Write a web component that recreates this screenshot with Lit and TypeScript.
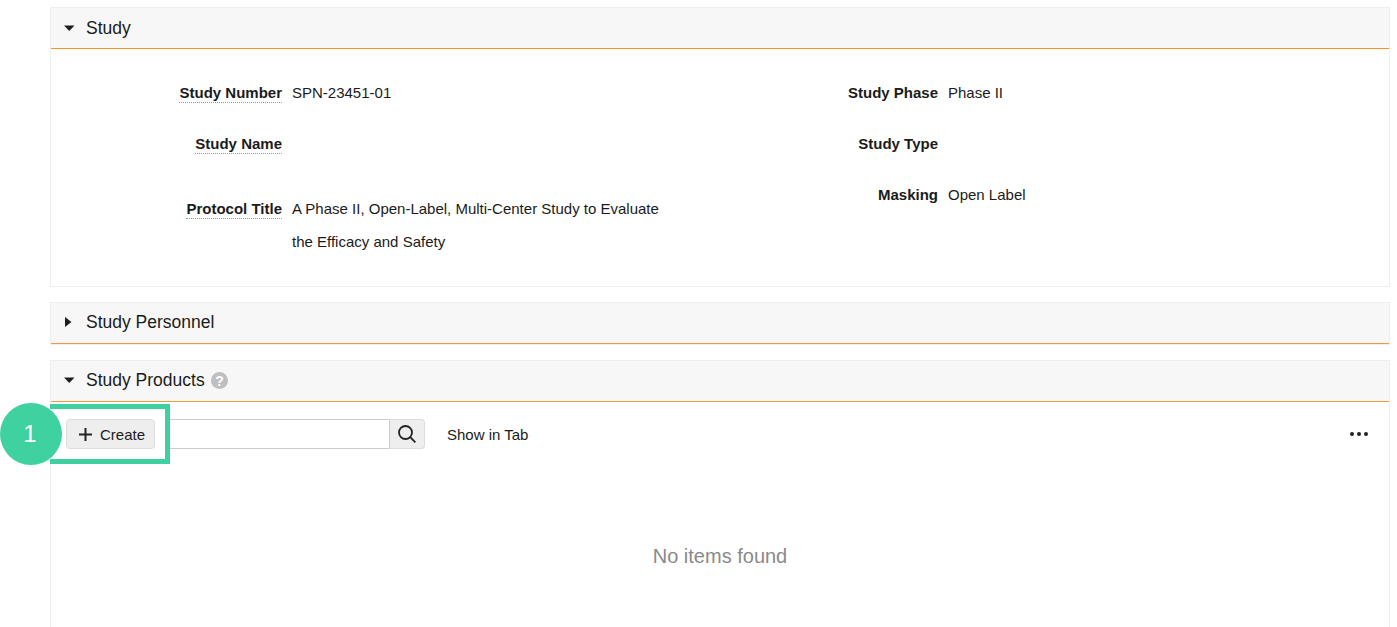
import { LitElement, html, css } from "lit";
import { customElement } from "lit/decorators.js";

@customElement("app-root")
export class AppRoot extends LitElement {
  static styles = css`
    :host {
      display: block;
      height: 627px;
      overflow: hidden;
      box-sizing: border-box;
      padding: 7px 7px 0 50px;
      background: #fff;
      font-family: "Liberation Sans", Arial, sans-serif;
      font-size: 15px;
      color: #1b1b1b;
    }
    .panel {
      border: 1px solid #eeeeee;
      background: #fff;
      margin-bottom: 15px;
    }
    .panel.last {
      margin-bottom: 0;
      border-bottom: none;
      height: 400px;
    }
    .head {
      height: 41px;
      box-sizing: border-box;
      display: flex;
      align-items: center;
      background: #f7f7f7;
      border-bottom: 1px solid #ee9a3f;
      font-size: 17.5px;
      padding-left: 13px;
      padding-bottom: 2px;
    }
    .head.active { border-bottom-color: #f7941d; padding-bottom: 0; }
    .caret { width: 11px; height: 10px; margin-right: 11px; flex: none; fill: #1f1f1f; }
    .help { width: 17px; height: 17px; margin-left: 6px; flex: none; }
    .fields { display: flex; padding: 34px 0 28px; }
    .col { flex: 1 1 0; display: flex; flex-direction: column; gap: 31px; }
    .row { display: grid; line-height: 20px; column-gap: 10px; }
    .left .row { grid-template-columns: 231px 1fr; }
    .right .row { grid-template-columns: 218px 1fr; }
    .row.tall { line-height: 33px; margin-top: 7px; }
    .label { text-align: right; font-weight: 700; }
    .label span.tip { border-bottom: 1px dotted #9a9a9a; padding-bottom: 1px; }
    .value { max-width: 380px; }
    .toolbar {
      position: relative;
      height: 64px;
      display: flex;
      align-items: center;
      padding: 0 20px 0 15px;
    }
    .search { display: flex; height: 30px; }
    .search .input {
      width: 323px;
      box-sizing: border-box;
      border: 1px solid #cccccc;
      border-right: none;
      background: #fff;
    }
    .search .go {
      width: 36px;
      box-sizing: border-box;
      border: 1px solid #dddddd;
      border-left: 1px solid #cccccc;
      border-radius: 0 4px 4px 0;
      background: #eeeeee;
      display: flex;
      align-items: center;
      justify-content: center;
    }
    .go svg { width: 18px; height: 18px; }
    .tab { margin-left: 22px; }
    .more { margin-left: auto; width: 20px; height: 6px; fill: #222; }
    .create {
      position: absolute;
      left: 15px;
      top: 17px;
      width: 89px;
      height: 30px;
      box-sizing: border-box;
      border: 1px solid #dddddd;
      border-radius: 4px;
      background: #eeeeee;
      display: flex;
      align-items: center;
      padding-left: 12px;
      gap: 8px;
    }
    .create svg { width: 13px; height: 13px; flex: none; }
    .mark {
      position: absolute;
      left: -1px;
      top: 2px;
      width: 120px;
      height: 60px;
      box-sizing: border-box;
      border: 5px solid #3fd0a0;
      border-left: none;
      background: #fff;
    }
    .badge {
      position: absolute;
      left: -51px;
      top: 1px;
      width: 62px;
      height: 62px;
      box-sizing: border-box;
      padding-right: 2px;
      border-radius: 50%;
      background: #3fd2a0;
      color: #fff;
      font-size: 24px;
      display: flex;
      align-items: center;
      justify-content: center;
    }
    .empty {
      text-align: center;
      font-size: 20px;
      color: #8a8a8a;
      padding-top: 78px;
      line-height: 24px;
    }
  `;

  private caretDown() {
    return html`<svg class="caret" viewBox="0 0 11 10"><path d="M0 2.5h10.5L5.25 8z" /></svg>`;
  }
  private caretRight() {
    return html`<svg class="caret" viewBox="0 0 11 10"><path d="M1 0l6.5 5L1 10z" /></svg>`;
  }
  private field(label: string, value: unknown, tip: boolean, tall = false) {
    return html`<div class="row ${tall ? "tall" : ""}">
      <div class="label">${tip ? html`<span class="tip">${label}</span>` : label}</div>
      <div class="value">${value}</div>
    </div>`;
  }

  render() {
    return html`
      <section class="panel">
        <div class="head active">${this.caretDown()}Study</div>
        <div class="fields">
          <div class="col left">
            ${this.field("Study Number", "SPN-23451-01", true)}
            ${this.field("Study Name", "", true)}
            ${this.field(
              "Protocol Title",
              "A Phase II, Open-Label, Multi-Center Study to Evaluate the Efficacy and Safety",
              true,
              true
            )}
          </div>
          <div class="col right">
            ${this.field("Study Phase", "Phase II", false)}
            ${this.field("Study Type", "", false)}
            ${this.field("Masking", "Open Label", false)}
          </div>
        </div>
      </section>
      <section class="panel">
        <div class="head">${this.caretRight()}Study Personnel</div>
      </section>
      <section class="panel last">
        <div class="head">
          ${this.caretDown()}Study Products
          <svg class="help" viewBox="0 0 17 17">
            <circle cx="8.5" cy="8.5" r="8.5" fill="#bfbfbf" />
            <text x="8.5" y="13.5" text-anchor="middle" font-size="14" font-weight="700" fill="#fff" font-family="Liberation Sans">?</text>
          </svg>
        </div>
        <div class="toolbar">
          <div class="search">
            <div class="input"></div>
            <div class="go">
              <svg viewBox="0 0 18 18" fill="none" stroke="#222" stroke-width="1.8">
                <circle cx="7.5" cy="7.5" r="6.5" />
                <path d="M12.2 12.2l5.2 5.2" />
              </svg>
            </div>
          </div>
          <div class="tab">Show in Tab</div>
          <svg class="more" viewBox="0 0 20 6"><circle cx="3" cy="3" r="2" /><circle cx="10" cy="3" r="2" /><circle cx="17" cy="3" r="2" /></svg>
          <div class="mark"></div>
          <div class="create">
            <svg viewBox="0 0 13 13" fill="none" stroke="#222" stroke-width="2"><path d="M6.5 0v13M0 6.5h13" /></svg>
            Create
          </div>
          <div class="badge">1</div>
        </div>
        <div class="empty">No items found</div>
      </section>
    `;
  }
}
